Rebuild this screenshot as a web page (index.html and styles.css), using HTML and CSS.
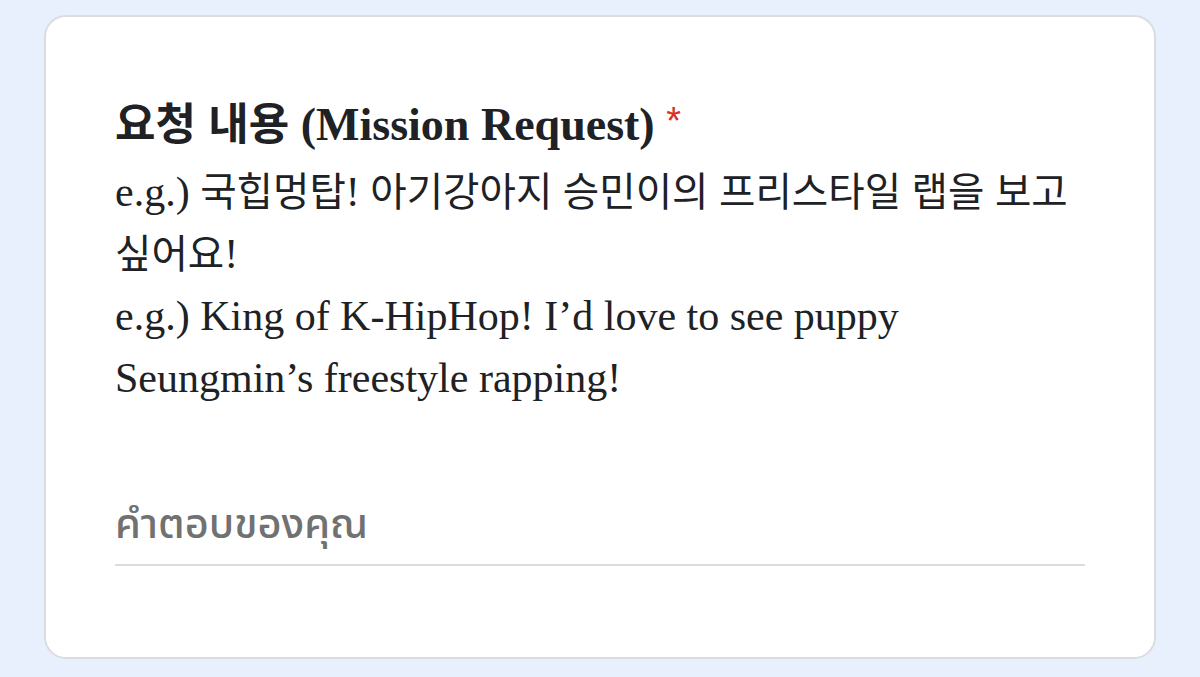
FILE: index.html
```html
<!DOCTYPE html>
<html lang="ko">
<head>
<meta charset="utf-8">
<title>Mission Request</title>
<link rel="stylesheet" href="styles.css">
</head>
<body>
<div class="page">
  <div class="card">
    <div class="title"><span class="ko">요청 내용</span> (Mission Request) <span class="req">*</span></div>
    <div class="desc">
      <div>e.g.) <span class="ko">국힙멍탑</span>! <span class="ko">아기강아지</span> <span class="ko">승민이의</span> <span class="ko">프리스타일</span> <span class="ko">랩을</span> <span class="ko">보고</span> <span class="ko">싶어요</span>!</div>
      <div>e.g.) King of K-HipHop! I’d love to see puppy Seungmin’s freestyle rapping!</div>
    </div>
    <div class="answer">
      <div class="placeholder">คำตอบของคุณ</div>
    </div>
  </div>
</div>
</body>
</html>
```
FILE: styles.css
```css
html, body {
  margin: 0;
  padding: 0;
  background: #e9f0fd;
}
.page {
  padding: 15px 44px 0 44px;
}
.card {
  background: #ffffff;
  border: 2px solid #dadce0;
  border-radius: 22px;
  padding: 82px 69px 91px 69px;
  color: #202124;
}
.title {
  font-family: "Liberation Serif", "Noto Sans CJK KR", serif;
  font-weight: bold;
  font-size: 46px;
  line-height: 50px;
}
.title .ko {
  font-family: "Noto Sans CJK KR", sans-serif;
  font-size: 44px;
  line-height: 1;
}
.req {
  color: #d93025;
  font-family: "Liberation Sans", sans-serif;
  font-weight: normal;
  font-size: 38px;
  line-height: 1;
  vertical-align: 6px;
}
.desc {
  margin-top: 11px;
  font-family: "Liberation Serif", "Noto Sans CJK KR", serif;
  font-size: 42px;
  line-height: 62px;
}
.desc .ko {
  font-family: "Noto Sans CJK KR", sans-serif;
  font-size: 39.6px;
  line-height: 1;
}
.answer {
  margin-top: 89px;
  border-bottom: 2px solid #dcdcdc;
  padding-bottom: 10px;
}
.placeholder {
  font-family: "Noto Sans Thai", "Noto Sans", "DejaVu Sans", sans-serif;
  font-size: 41.5px;
  font-weight: 500;
  line-height: 56px;
  color: #717171;
}
```
